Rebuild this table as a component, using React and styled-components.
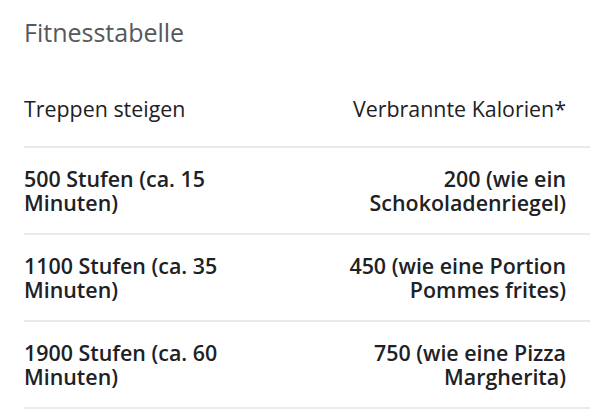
import React from "react";
import styled, { createGlobalStyle } from "styled-components";

const Global = createGlobalStyle`
  html, body { margin: 0; padding: 0; background: #ffffff; }
  body { font-family: "Open Sans", Roboto, "Liberation Sans", sans-serif; color: #202124; }
`;

const Page = styled.div`
  width: 590px;
  padding-left: 24px;
  box-sizing: border-box;
`;

const Title = styled.h2`
  margin: 0;
  padding-top: 17px;
  font-size: 25px;
  line-height: 30px;
  font-weight: 400;
  color: #55585c;
`;

const Table = styled.div`
  margin-top: 50px;
  display: grid;
  grid-template-columns: 1fr 1fr;
`;

const Cell = styled.div`
  font-size: 21.4px;
  line-height: 24px;
  font-weight: ${(p) => (p.$head ? 400 : 600)};
  color: #202124;
  text-align: ${(p) => (p.$right ? "right" : "left")};
  padding: ${(p) => (p.$head ? "0 0 25px" : "19px 0 18px")};
  padding-right: 24px;
  padding-left: ${(p) => (p.$right ? "24px" : "0")};
  border-bottom: 2px solid #e8eaed;
`;

const rows = [
  ["500 Stufen (ca. 15 Minuten)", "200 (wie ein Schokoladenriegel)"],
  ["1100 Stufen (ca. 35 Minuten)", "450 (wie eine Portion Pommes frites)"],
  ["1900 Stufen (ca. 60 Minuten)", "750 (wie eine Pizza Margherita)"],
];

export default function App() {
  return (
    <Page>
      <Global />
      <Title>Fitnesstabelle</Title>
      <Table>
        <Cell $head>Treppen steigen</Cell>
        <Cell $head $right>Verbrannte Kalorien*</Cell>
        {rows.map(([a, b]) => (
          <React.Fragment key={a}>
            <Cell>{a}</Cell>
            <Cell $right>{b}</Cell>
          </React.Fragment>
        ))}
      </Table>
    </Page>
  );
}
